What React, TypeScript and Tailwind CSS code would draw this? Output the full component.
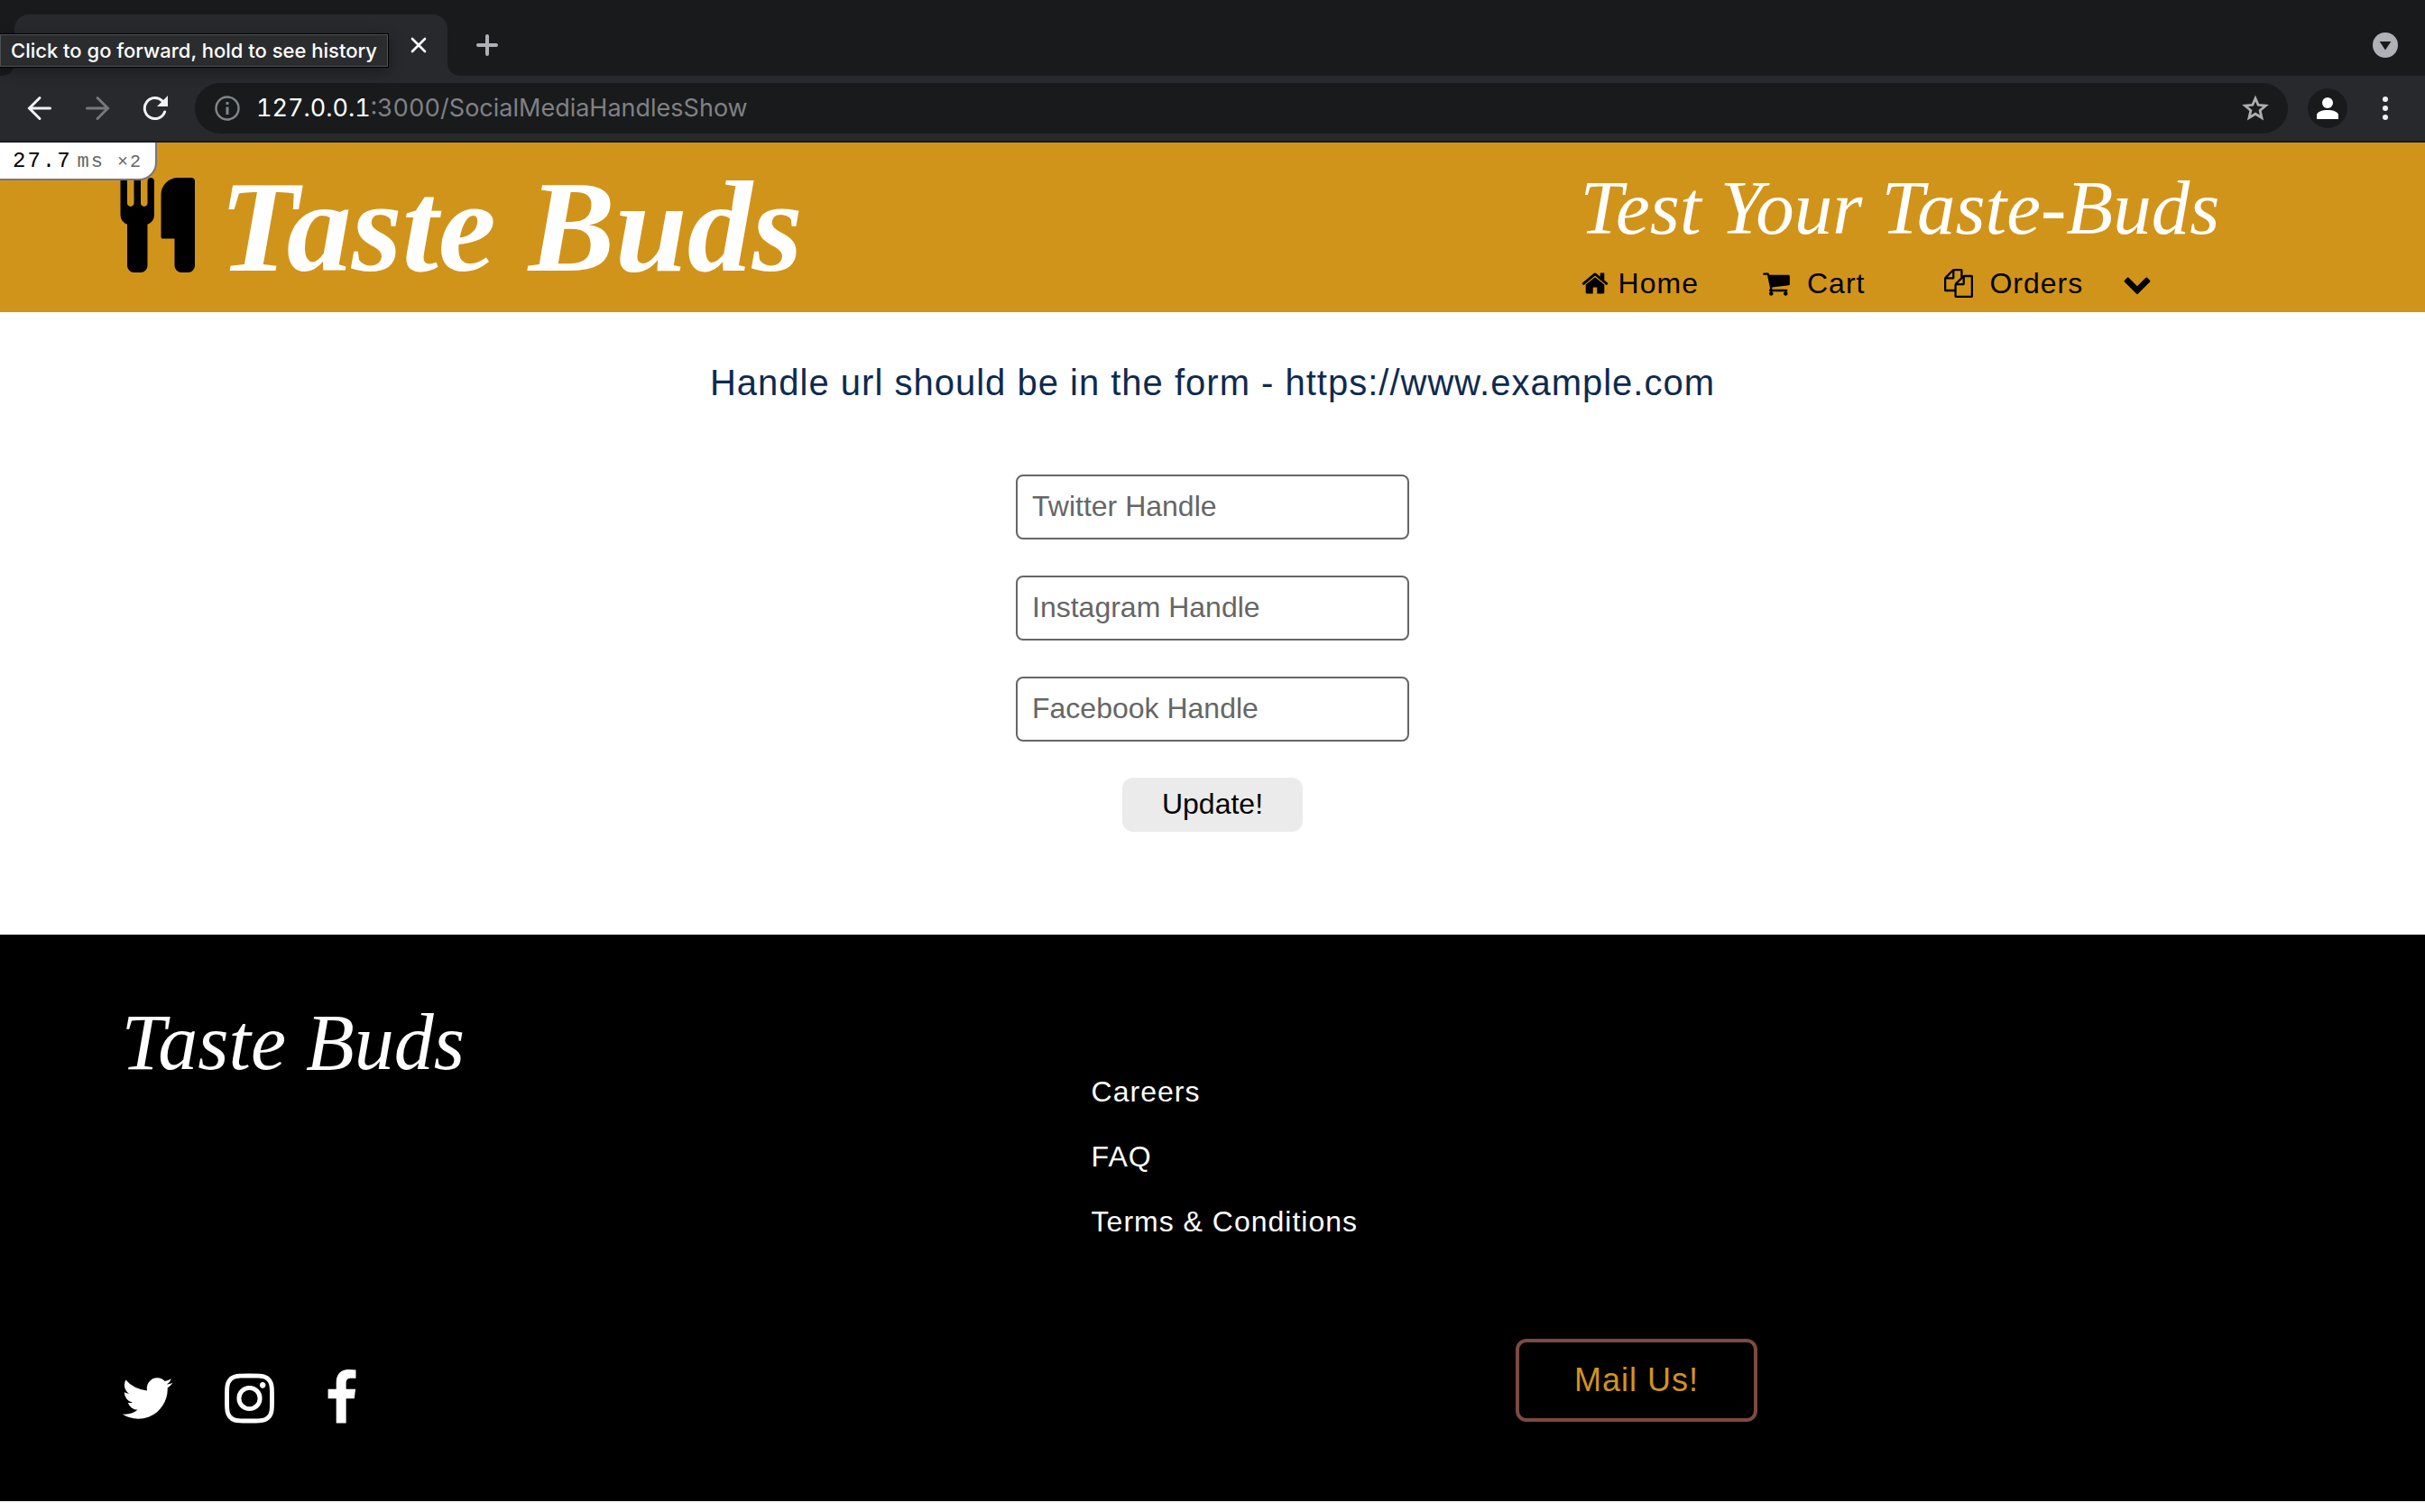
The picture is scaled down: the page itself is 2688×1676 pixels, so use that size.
import React from "react";

const icons = {
  cutlery: {
    viewBox: "0 64 1792 1792",
    path: "M768 128v640q0 61-35.5 111t-92.5 70v779q0 52-38 90t-90 38h-128q-52 0-90-38t-38-90v-779q-57-20-92.5-70t-35.5-111v-640q0-26 19-45t45-19 45 19 19 45v416q0 26 19 45t45 19 45-19 19-45v-416q0-26 19-45t45-19 45 19 19 45v416q0 26 19 45t45 19 45-19 19-45v-416q0-26 19-45t45-19 45 19 19 45zm768 0v1600q0 52-38 90t-90 38h-128q-52 0-90-38t-38-90v-512h-224q-13 0-22.5-9.5t-9.5-22.5v-800q0-132 94-226t226-94h256q26 0 45 19t19 45z",
  },
  home: {
    viewBox: "0 0 1792 1792",
    path: "M1472 992v480q0 26-19 45t-45 19h-384v-384h-256v384h-384q-26 0-45-19t-19-45v-480q0-1 .5-3t.5-3l575-474 575 474q1 2 1 6zm223-69l-62 74q-8 9-21 11h-3q-13 0-21-7l-692-577-692 577q-12 8-24 7-13-2-21-11l-62-74q-8-10-7-23.5t11-21.5l719-599q32-26 76-26t76 26l244 204v-195q0-14 9-23t23-9h192q14 0 23 9t9 23v408l219 182q10 8 11 21.5t-7 23.5z",
  },
  cart: {
    viewBox: "0 0 1792 1792",
    path: "M704 1536q0 52-38 90t-90 38-90-38-38-90 38-90 90-38 90 38 38 90zm896 0q0 52-38 90t-90 38-90-38-38-90 38-90 90-38 90 38 38 90zm128-1088v512q0 24-16.5 42.5t-40.5 21.5l-1044 122q13 60 13 70 0 16-24 64h920q26 0 45 19t19 45-19 45-45 19h-1024q-26 0-45-19t-19-45q0-11 8-31.5t16-36 21.5-40 15.5-29.5l-177-823h-204q-26 0-45-19t-19-45 19-45 45-19h256q16 0 28.5 6.5t19.5 15.5 13 24.5 8 26 5.5 29.5 4.5 26h1201q26 0 45 19t19 45z",
  },
  files: {
    viewBox: "0 0 1792 1792",
    path: "M1696 384q40 0 68 28t28 68v1216q0 40-28 68t-68 28h-960q-40 0-68-28t-28-68v-288h-544q-40 0-68-28t-28-68v-672q0-40 20-88t48-76l408-408q28-28 76-48t88-20h416q40 0 68 28t28 68v328q68-40 128-40h416zm-544 213l-299 299h299v-299zm-640-384l-299 299h299v-299zm196 647l316-316v-416h-384v416q0 40-28 68t-68 28h-416v640h512v-256q0-40 20-88t48-76zm956 804v-1152h-384v416q0 40-28 68t-68 28h-416v640h896z",
  },
  chevron: {
    viewBox: "0 0 1792 1792",
    path: "M1683 808l-742 741q-19 19-45 19t-45-19l-742-741q-19-19-19-45.5t19-45.5l166-165q19-19 45-19t45 19l531 531 531-531q19-19 45-19t45 19l166 165q19 19 19 45.5t-19 45.5z",
  },
  twitter: {
    viewBox: "64 0 1664 1792",
    path: "M1684 408q-67 98-162 167 1 14 1 42 0 130-38 259.5t-115.5 248.5-184.5 210.5-258 146-323 54.5q-271 0-496-145 35 4 78 4 225 0 401-138-105-2-188-64.5t-114-159.5q33 5 61 5 43 0 85-11-112-23-185.5-111.5t-73.5-205.5v-4q68 38 146 41-66-44-105-115t-39-154q0-88 44-163 121 149 294.5 238.5t371.5 99.5q-8-38-8-74 0-134 94.5-228.5t228.5-94.5q140 0 236 102 109-21 205-78-37 115-142 178 93-10 186-50z",
  },
  instagram: {
    viewBox: "128 0 1536 1792",
    path: "M1152 896q0-106-75-181t-181-75-181 75-75 181 75 181 181 75 181-75 75-181zm138 0q0 164-115 279t-279 115-279-115-115-279 115-279 279-115 279 115 115 279zm108-410q0 38-27 65t-65 27-65-27-27-65 27-65 65-27 65 27 27 65zm-502-220q-7 0-76.5-.5t-105.5 0-96.5 3-103 10-71.5 18.5q-50 20-88 58t-58 88q-11 29-18.5 71.5t-10 103-3 96.5 0 105.5.5 76.5-.5 76.5 0 105.5 3 96.5 10 103 18.5 71.5q20 50 58 88t88 58q29 11 71.5 18.5t103 10 96.5 3 105.5 0 76.5-.5 76.5.5 105.5 0 96.5-3 103-10 71.5-18.5q50-20 88-58t58-88q11-29 18.5-71.5t10-103 3-96.5 0-105.5-.5-76.5.5-76.5 0-105.5-3-96.5-10-103-18.5-71.5q-20-50-58-88t-88-58q-29-11-71.5-18.5t-103-10-96.5-3-105.5 0-76.5.5zm768 630q0 229-5 317-10 208-124 322t-322 124q-88 5-317 5t-317-5q-208-10-322-124t-124-322q-5-88-5-317t5-317q10-208 124-322t322-124q88-5 317-5t317 5q208 10 322 124t124 322q5 88 5 317z",
  },
  facebook: {
    viewBox: "384 0 1024 1792",
    path: "M1343 12v264h-157q-86 0-116 36t-30 108v189h293l-39 296h-254v759h-306v-759h-255v-296h255v-218q0-186 104-288.5t277-102.5q147 0 228 12z",
  },
};

function Icon({ name, className }: { name: keyof typeof icons; className: string }) {
  const { viewBox, path } = icons[name];
  return (
    <svg viewBox={viewBox} className={className} fill="currentColor" aria-hidden="true">
      <path d={path} />
    </svg>
  );
}

function TabStrip() {
  return (
    <div className="relative flex h-[84px] items-end justify-between bg-[#191a1c] pr-[30px]">
      <div className="flex items-end">
        <svg viewBox="0 0 16 16" className="size-4 text-[#28292d]" fill="currentColor" aria-hidden="true">
          <path d="M16 0Q16 16 0 16H16z" />
        </svg>
        <div className="flex h-[68px] w-[480px] items-center justify-end rounded-t-2xl bg-[#28292d] pr-[22px]">
          <button aria-label="Close tab" className="text-white">
            <svg viewBox="0 0 20 20" className="size-5" stroke="currentColor" strokeWidth="2.6" strokeLinecap="round">
              <path d="M3 3L17 17M17 3L3 17" />
            </svg>
          </button>
        </div>
        <svg viewBox="0 0 16 16" className="size-4 text-[#28292d]" fill="currentColor" aria-hidden="true">
          <path d="M0 0Q0 16 16 16H0z" />
        </svg>
        <button aria-label="New tab" className="mb-[22px] ml-4 text-[#afb1b6]">
          <svg viewBox="0 0 24 24" className="size-6" stroke="currentColor" strokeWidth="4" strokeLinecap="round">
            <path d="M12 2V22M2 12H22" />
          </svg>
        </button>
      </div>
      <button aria-label="Search tabs" className="mb-5 text-[#afb1b6]">
        <svg viewBox="0 0 28 28" className="size-7">
          <circle cx="14" cy="14" r="14" fill="currentColor" />
          <path d="M7.700 10H20.300L14 19.500z" fill="#191a1c" />
        </svg>
      </button>
      <div
        role="tooltip"
        className="absolute left-0 top-[38px] z-10 flex h-9 items-center whitespace-nowrap border border-[#505154] bg-[#2b2c2e] px-[11px] font-['Inter',sans-serif] text-[22px] font-medium text-white shadow-[0_4px_16px_rgba(0,0,0,0.4)] outline outline-black"
      >
        Click to go forward, hold to see history
      </div>
    </div>
  );
}

function Toolbar() {
  return (
    <div className="flex h-[74px] items-center border-b-2 border-[#191a1c] bg-[#28292d] pl-[30px] pr-[41px]">
      <button aria-label="Back" className="text-[#f1f2f4]">
        <svg viewBox="0 0 28 28" className="size-7" fill="none" stroke="currentColor" strokeWidth="3" strokeLinecap="round">
          <path d="M25.500 14H3M14 2.500L2.500 14L14 25.500" />
        </svg>
      </button>
      <button aria-label="Forward" className="ml-9 text-[#77787b]">
        <svg viewBox="0 0 28 28" className="size-7" fill="none" stroke="currentColor" strokeWidth="3" strokeLinecap="round">
          <path d="M2.500 14H25M14 2.500L25.500 14L14 25.500" />
        </svg>
      </button>
      <button aria-label="Reload" className="ml-9 text-[#f1f2f4]">
        <svg viewBox="0 0 28 28" className="size-7" fill="none" stroke="currentColor" strokeWidth="3" strokeLinecap="round">
          <path d="M24.600 18A11.500 11.500 0 1 1 22 6" />
          <path d="M28 0V12H16z" fill="currentColor" stroke="none" />
        </svg>
      </button>
      <div className="ml-[30px] flex h-14 flex-1 items-center rounded-full bg-[#191a1c] pl-[22px] pr-5 font-['Inter',sans-serif] text-[27px] tabular-nums">
        <svg viewBox="0 0 28 28" className="size-7 text-[#80868b]" fill="none" stroke="currentColor" aria-hidden="true">
          <circle cx="14" cy="14" r="12.500" strokeWidth="2.400" />
          <path d="M14 12.500V21M14 7V10" strokeWidth="3" />
        </svg>
        <a href="#" className="ml-[18px] text-white">
          127.0.0.1<span className="text-[#808184]">:3000/SocialMediaHandlesShow</span>
        </a>
        <button aria-label="Bookmark this page" className="ml-auto text-[#aeaeae]">
          <svg viewBox="0 0 32 32" className="size-8" fill="none" stroke="currentColor" strokeWidth="2.800">
            <path d="M16 5L19.100 12.300L27.400 13L21.100 18.400L23 26.500L16 22.200L9 26.500L10.900 18.400L4.600 13L12.900 12.300z" />
          </svg>
        </button>
      </div>
      <button aria-label="Profile" className="ml-[22px] flex size-11 items-center justify-center rounded-full bg-[#191a1c] text-white">
        <svg viewBox="0 0 24 24" className="size-6" fill="currentColor">
          <circle cx="12" cy="6" r="6" />
          <path d="M0 24V19.500C0 16 6 14 12 14S24 16 24 19.500V24z" />
        </svg>
      </button>
      <button aria-label="Menu" className="ml-[39px] text-[#f0f0f2]">
        <svg viewBox="0 0 6 26" className="h-[26px] w-[6px]" fill="currentColor">
          <circle cx="3" cy="3" r="3" />
          <circle cx="3" cy="13" r="3" />
          <circle cx="3" cy="23" r="3" />
        </svg>
      </button>
    </div>
  );
}

function SiteHeader() {
  return (
    <header className="relative flex h-[188px] justify-between bg-[#d1941b] pl-[126px] pr-[5%]">
      <div className="absolute left-0 top-0 flex h-[42px] w-[174px] items-baseline rounded-br-[20px] border-b-2 border-r-2 border-[#76777a] bg-white pl-[14px] font-['Liberation_Mono',monospace] tracking-[2px] text-[#666]">
        <span className="text-2xl leading-[42px] text-black">27.7</span>
        <span className="ml-[6px] text-[22px] leading-[42px]">ms</span>
        <span className="ml-[14px] text-xl leading-[42px]">×2</span>
      </div>
      <a href="#" className="flex items-center text-white">
        <Icon name="cutlery" className="mt-[-6px] size-[105px] text-black" />
        <span className="ml-3 font-['Liberation_Serif',serif] text-[144px] font-bold italic leading-none">Taste Buds</span>
      </a>
      <div className="flex w-[802px] flex-col">
        <p className="pt-6 font-['Liberation_Serif',serif] text-[85px] italic leading-[96px] text-white">
          Test Your Taste-Buds
        </p>
        <nav className="flex items-center text-[32px] leading-[72px] tracking-[1px] text-black">
          <a href="#" className="flex items-center gap-[10px]">
            <Icon name="home" className="size-8" />
            Home
          </a>
          <a href="#" className="ml-[70px] flex items-center gap-[18px]">
            <Icon name="cart" className="size-8" />
            Cart
          </a>
          <a href="#" className="ml-[88px] flex items-center gap-[18px]">
            <Icon name="files" className="size-8" />
            Orders
          </a>
          <button aria-label="More" className="ml-11">
            <Icon name="chevron" className="size-8" />
          </button>
        </nav>
      </div>
    </header>
  );
}

function HandlesForm() {
  return (
    <main className="flex flex-col items-center bg-white pb-[114px] pt-[54px]">
      <h1 className="text-[40px] leading-[48px] tracking-[1px] text-[#0f2a4f]">
        Handle url should be in the form - https://www.example.com
      </h1>
      <form className="mt-[78px] flex flex-col items-center gap-10" onSubmit={(e) => e.preventDefault()}>
        {["Twitter Handle", "Instagram Handle", "Facebook Handle"].map((label) => (
          <input
            key={label}
            type="text"
            aria-label={label}
            placeholder={label}
            className="h-[72px] w-[436px] rounded-lg border-2 border-[#666] bg-white px-4 pb-0.5 text-[32px] placeholder:text-[#666]"
          />
        ))}
        <button type="submit" className="h-[60px] w-[200px] rounded-xl bg-[#ebebeb] pb-0.5 text-[32px] text-black">
          Update!
        </button>
      </form>
    </main>
  );
}

function SiteFooter() {
  return (
    <footer className="grid h-[628px] grid-cols-[16fr_7fr_13fr] bg-black px-[5%] pb-[82px] pt-[72px] tracking-[1px] text-white">
      <div className="flex flex-col justify-between">
        <a href="#" className="font-['Liberation_Serif',serif] text-[88px] italic leading-[96px] tracking-normal">
          Taste Buds
        </a>
        <div className="flex gap-14">
          <a href="#" aria-label="Twitter">
            <Icon name="twitter" className="h-16 w-[59px]" />
          </a>
          <a href="#" aria-label="Instagram">
            <Icon name="instagram" className="h-16 w-[55px]" />
          </a>
          <a href="#" aria-label="Facebook">
            <Icon name="facebook" className="h-16 w-[37px]" />
          </a>
        </div>
      </div>
      <nav className="flex flex-col items-start whitespace-nowrap pt-[66px] text-[32px] leading-[72px]">
        <a href="#">Careers</a>
        <a href="#">FAQ</a>
        <a href="#">Terms &amp; Conditions</a>
      </nav>
      <div className="flex items-end">
        <a
          href="#"
          className="mb-[6px] flex h-[92px] w-[268px] items-center justify-center rounded-xl border-4 border-[#7b4a42] text-[36px] text-[#d1941b]"
        >
          Mail Us!
        </a>
      </div>
    </footer>
  );
}

export default function App() {
  return (
    <div className="min-h-screen bg-white font-['Liberation_Sans',sans-serif]">
      <TabStrip />
      <Toolbar />
      <SiteHeader />
      <HandlesForm />
      <SiteFooter />
    </div>
  );
}
